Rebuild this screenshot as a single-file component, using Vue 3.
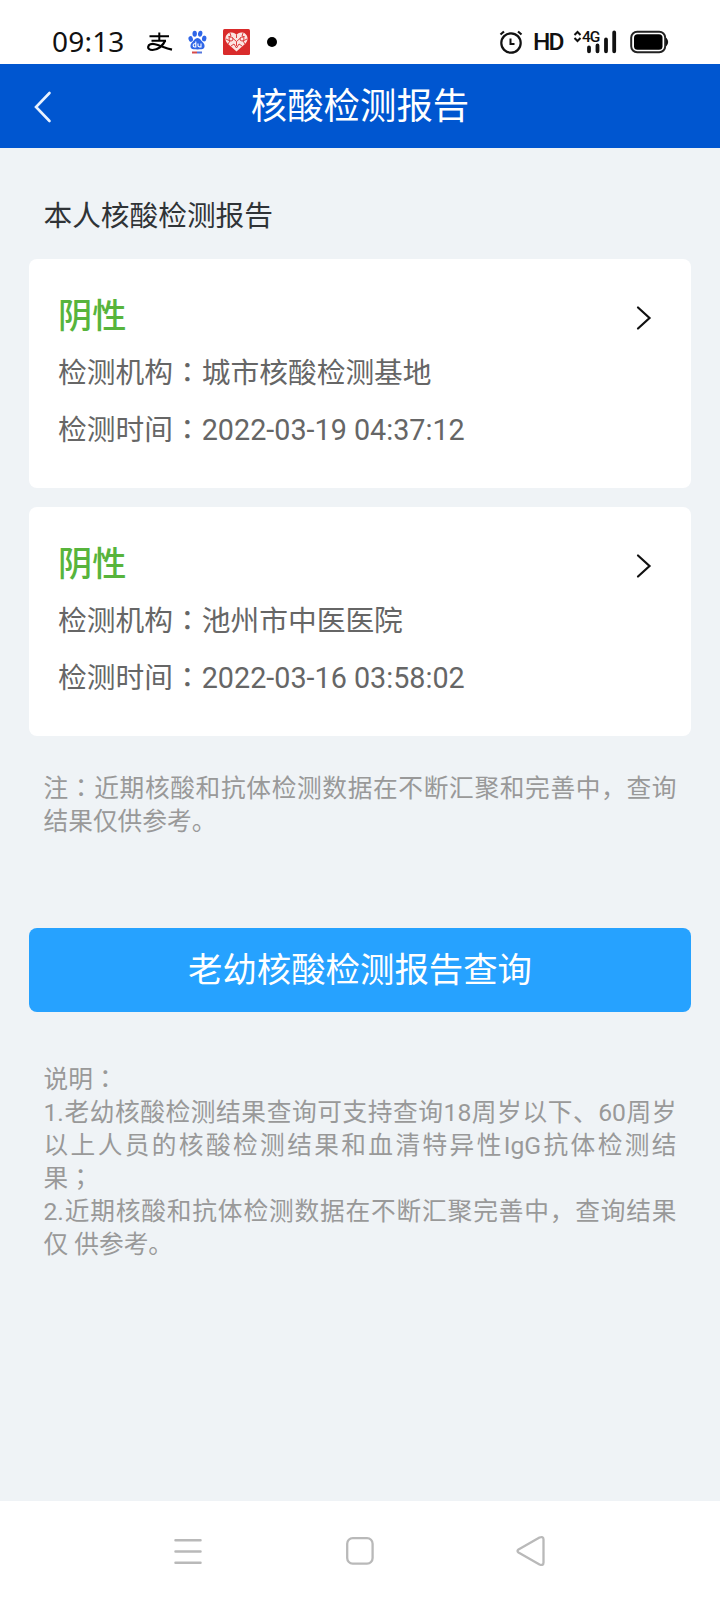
<script setup>
const reports = [
  { result: '阴性', org: '城市核酸检测基地', time: '2022-03-19 04:37:12' },
  { result: '阴性', org: '池州市中医医院', time: '2022-03-16 03:58:02' },
]
</script>

<template>
  <div class="phone">
    <div class="status">
      <span class="clock">09:13</span>
      <svg class="pay" width="26" height="20" viewBox="0 0 26 20" fill="none" stroke="#000">
        <path d="M2.500 4.200H22M12.300 0.500V8.500M4.500 8.800H19" stroke-width="2" />
        <path d="M18.200 8.500C16 14 10.500 18 5.500 18C2.200 18 1 16.500 1.200 14.800C1.500 12.500 4.500 11.400 8 12.200C13 13.400 18 16 25 17.600" stroke-width="2.200" />
      </svg>
      <svg class="paw" width="19" height="24" viewBox="0 0 19 24">
        <g fill="#2f66e8">
          <ellipse cx="2.700" cy="9" rx="2.200" ry="2.900" transform="rotate(-15 2.700 9)" />
          <ellipse cx="6.700" cy="3.700" rx="2.200" ry="3" />
          <ellipse cx="12.200" cy="3.700" rx="2.200" ry="3" transform="rotate(10 12.200 3.700)" />
          <ellipse cx="16.200" cy="8.500" rx="2.200" ry="2.900" transform="rotate(10 16.200 8.500)" />
          <path d="M9.500 8C12 8 13 10.500 15 12.500C17.500 15 17 19 13.500 19.300C11.500 19.500 7.500 19.500 5.500 19.300C2 19 1.500 15 4 12.500C6 10.500 7 8 9.500 8Z" />
        </g>
        <path d="M7.800 11.500V17H6.500C4.700 17 4.700 13.700 6.500 13.700H7.800M10 13.500V15.800C10 17 11 17 13 17V13.500" fill="none" stroke="#fff" stroke-width="1.100" />
        <path d="M4 22.500H9" stroke="#d64a4a" stroke-width="2" />
        <path d="M9 22.500H14" stroke="#5576dc" stroke-width="2" />
      </svg>
      <svg class="heart" width="27" height="26" viewBox="0 0 27 26">
        <rect width="27" height="26" rx="1.500" fill="#d92b2b" />
        <path d="M13.500 22.500L4.500 14.500C1 11 2 4.500 7.500 3.500C10 3 12.500 4.200 13.500 6C14.500 4.200 17 3 19.500 3.500C25 4.500 26 11 22.500 14.500Z" fill="#fbe5e1" />
        <g fill="none" stroke="#d92b2b" stroke-width="0.900">
          <path d="M13.500 6V9M9.500 9L13.500 12.500L17.500 9M13.500 12.500V17M3 10L7 12L5 15M24 10L20 12L22 15M7 4L8 7L5 8M20 4L19 7L22 8M8 17L11 15L13.500 19L16 15L19 17" />
          <circle cx="8" cy="10" r="2" />
          <circle cx="19" cy="10" r="2" />
        </g>
      </svg>
      <i class="dot"></i>
      <div class="right">
        <svg width="24" height="26" viewBox="0 0 24 26" fill="none" stroke="#111" stroke-width="2.200">
          <circle cx="12" cy="14" r="9.700" />
          <path d="M11.500 9.500V15H15.500" stroke-width="2" />
          <path d="M1.500 5.500L5 2.500M22.500 5.500L19 2.500" />
        </svg>
        <span class="hd">HD</span>
        <div class="signal">
          <svg width="44" height="26" viewBox="0 0 44 26">
            <path d="M1.500 6L4.500 3L7.500 6M1.500 9L4.500 12L7.500 9" fill="none" stroke="#111" stroke-width="2" />
            <g stroke="#111" stroke-width="3.800" stroke-linecap="round">
              <path d="M16 18.500V22.300M24.500 16.500V22.300M33 10.500V22.300M41.200 3.500V22.300" />
            </g>
          </svg>
          <span class="gen">4G</span>
        </div>
        <svg class="battery" width="40" height="24" viewBox="0 0 40 24">
          <rect x="1.200" y="1.700" width="34" height="20.600" rx="6" fill="none" stroke="#222" stroke-width="2" />
          <rect x="4" y="4.300" width="28.500" height="15.400" rx="3.500" fill="#000" />
          <path d="M36.500 8.500Q39 12 36.500 15.500Z" fill="#111" stroke="#111" />
        </svg>
      </div>
    </div>

    <header class="bar">
      <svg class="back" width="18" height="32" viewBox="0 0 18 32" fill="none" stroke="#e9f2ff" stroke-width="2.600" stroke-linecap="round">
        <path d="M15.500 2L2 16L15.500 30" />
      </svg>
      <h1>核酸检测报告</h1>
    </header>

    <main>
      <h2>本人核酸检测报告</h2>
      <section v-for="r in reports" :key="r.time" class="card">
        <div class="head">
          <strong>{{ r.result }}</strong>
          <svg width="16" height="26" viewBox="0 0 16 26" fill="none" stroke="#111" stroke-width="2.200" stroke-linecap="round">
            <path d="M2 2.500L13.500 13L2 23.500" />
          </svg>
        </div>
        <p>检测机构<b>：</b>{{ r.org }}</p>
        <p>检测时间<b>：</b>{{ r.time }}</p>
      </section>

      <div class="note">
        <p class="full">注<b>：</b>近期核酸和抗体检测数据在不断汇聚和完善中，查询</p>
        <p>结果仅供参考。</p>
      </div>

      <button class="query">老幼核酸检测报告查询</button>

      <div class="note explain">
        <p>说明<b>：</b></p>
        <p class="full">1.老幼核酸检测结果查询可支持查询18周岁以下、60周岁</p>
        <p class="full">以上人员的核酸检测结果和血清特异性IgG抗体检测结</p>
        <p>果<b>；</b></p>
        <p class="full">2.近期核酸和抗体检测数据在不断汇聚完善中，查询结果</p>
        <p>仅 供参考。</p>
      </div>
    </main>

    <nav>
      <svg width="30" height="32" viewBox="0 0 30 32" stroke="#b9b9b9" stroke-width="2.500" stroke-linecap="round">
        <path d="M2.500 5.200H27.500M2.500 16.500H27.500M2.500 27.700H27.500" />
      </svg>
      <svg width="30" height="32" viewBox="0 0 30 32" fill="none" stroke="#b9b9b9" stroke-width="2.300">
        <rect x="2.200" y="3.200" width="25.400" height="25.400" rx="5.500" />
      </svg>
      <svg width="30" height="32" viewBox="0 0 30 32" fill="none" stroke="#b9b9b9" stroke-width="2.300" stroke-linejoin="round">
        <path d="M2.500 14.500L23.500 2.500Q27.500 1 27.500 4.500V27.500Q27.500 31 23.500 29.500L2.500 17.500Q0.500 16 2.500 14.500Z" />
      </svg>
    </nav>
  </div>
</template>

<style>
body { background: #fff; }
</style>

<style scoped>
.phone {
  width: 720px;
  height: 1600px;
  display: flex;
  flex-direction: column;
  background: #eff3f6;
  overflow: hidden;
  font-family: Roboto, "Noto Sans CJK SC", sans-serif;
  text-spacing-trim: space-all;
}
h1, h2, p { margin: 0; font-weight: 400; white-space: nowrap; }
svg { display: block; flex: none; }
b { font-family: "Noto Sans CJK TC", sans-serif; font-weight: 400; line-height: 0; }
.status {
  height: 64px;
  box-sizing: border-box;
  padding: 20px 50px 0 52px;
  display: flex;
  align-items: center;
  background: #fff;
  color: #111;
}
.clock { width: 94px; padding-bottom: 2px; font: 28px/36px "Noto Sans", sans-serif; letter-spacing: 0.2px; }
.pay { position: relative; left: 1px; }
.paw { margin-left: 16px; }
.heart { margin-left: 16px; }
.dot { width: 10px; height: 10px; margin-left: 17px; border-radius: 50%; background: #000; }
.right { margin-left: auto; display: flex; align-items: center; }
.hd { width: 32px; margin-left: 10px; font: 500 24.500px/32px Roboto, sans-serif; letter-spacing: -2px; }
.signal { position: relative; margin-left: 8px; }
.gen {
  position: absolute;
  left: 9px;
  top: 1px;
  font: 500 15.500px/15px Roboto, sans-serif;
  letter-spacing: -1px;
}
.battery { margin-left: 13px; }
.bar {
  height: 84px;
  display: grid;
  grid-template-columns: 68px 1fr 68px;
  align-items: center;
  background: #0056d0;
  color: #fff;
}
.back { margin: 1px 0 0 34px; }
h1 { padding-top: 2px; text-align: center; font-size: 36.400px; line-height: 50px; }
main { flex: 1; padding: 0 29px; }
h2 { margin: 48px 0 22px 14.500px; font-size: 28.700px; line-height: 41px; color: #2f3336; }
.card {
  height: 229px;
  margin-bottom: 19px;
  box-sizing: border-box;
  padding: 32px 39px 0 29px;
  border-radius: 8px;
  background: #fff;
  color: #666;
}
.head { display: flex; justify-content: space-between; align-items: center; height: 54px; }
.head strong { padding-bottom: 3px; font-size: 34.200px; line-height: 45px; font-weight: 500; color: #57b43c; }
.card p { height: 56.500px; font-size: 28.740px; line-height: 56px; }
.note { width: 633px; margin: 36px 0 0 14.500px; font-size: 24.700px; line-height: 33px; color: #999; }
.note p { height: 33px; }
.full { text-align: justify; text-align-last: justify; }
.query {
  display: block;
  width: 662px;
  height: 84px;
  margin: 90px 0 0;
  padding: 0 0 5px;
  border: 0;
  border-radius: 8px;
  background: #26a2ff;
  color: #fff;
  font: 34.400px/79px "Noto Sans CJK SC", sans-serif;
}
.explain { margin-top: 51px; }
nav {
  height: 99px;
  box-sizing: border-box;
  padding: 0 174px 0 173px;
  display: flex;
  align-items: center;
  justify-content: space-between;
  background: #fff;
}
</style>
